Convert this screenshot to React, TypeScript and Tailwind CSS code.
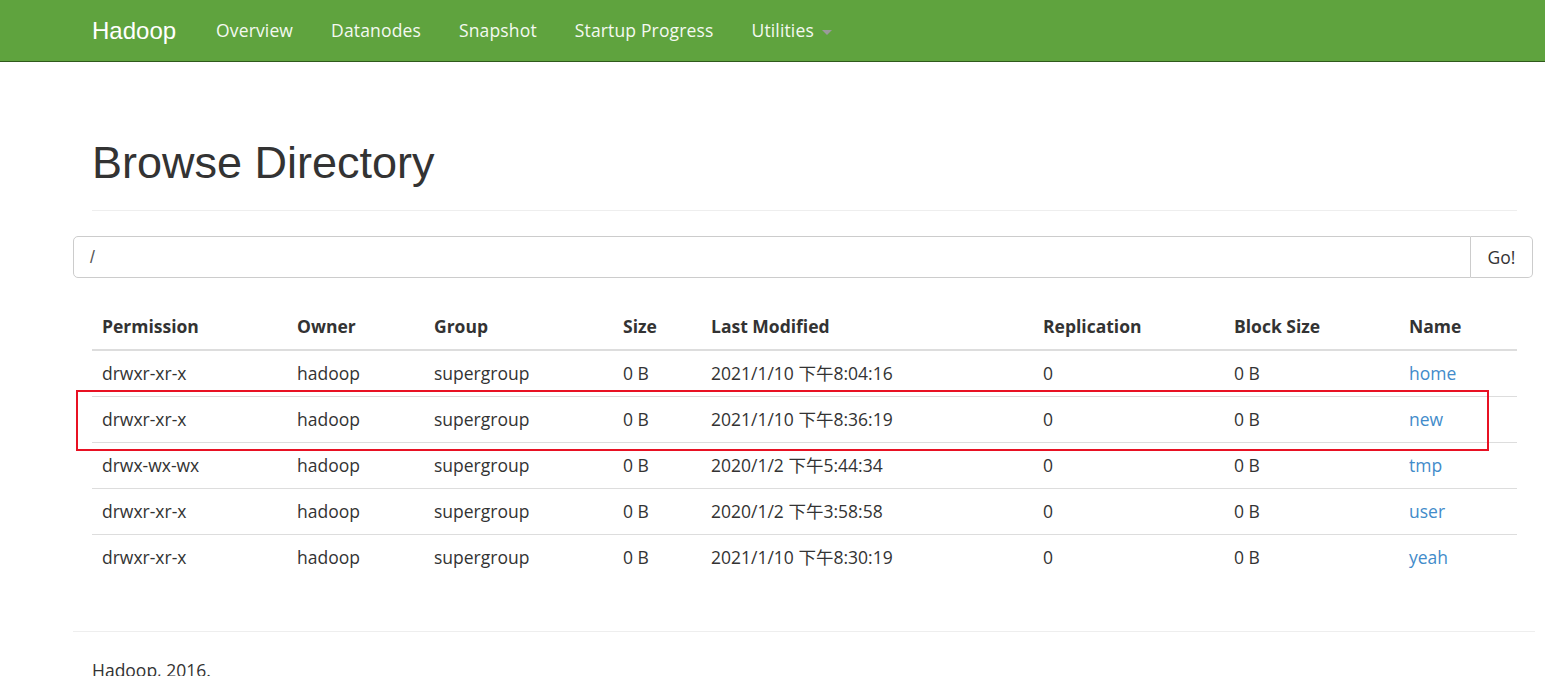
const rows = [
  { perm: 'drwxr-xr-x', owner: 'hadoop', group: 'supergroup', size: '0 B', mod: '2021/1/10 下午8:04:16', rep: '0', block: '0 B', name: 'home' },
  { perm: 'drwxr-xr-x', owner: 'hadoop', group: 'supergroup', size: '0 B', mod: '2021/1/10 下午8:36:19', rep: '0', block: '0 B', name: 'new' },
  { perm: 'drwx-wx-wx', owner: 'hadoop', group: 'supergroup', size: '0 B', mod: '2020/1/2 下午5:44:34', rep: '0', block: '0 B', name: 'tmp' },
  { perm: 'drwxr-xr-x', owner: 'hadoop', group: 'supergroup', size: '0 B', mod: '2020/1/2 下午3:58:58', rep: '0', block: '0 B', name: 'user' },
  { perm: 'drwxr-xr-x', owner: 'hadoop', group: 'supergroup', size: '0 B', mod: '2021/1/10 下午8:30:19', rep: '0', block: '0 B', name: 'yeah' },
];

const cols = ['w-[195px]', 'w-[137px]', 'w-[189px]', 'w-[88px]', 'w-[332px]', 'w-[191px]', 'w-[175px]', 'w-[118px]'];
const heads = ['Permission', 'Owner', 'Group', 'Size', 'Last Modified', 'Replication', 'Block Size', 'Name'];

const body = { fontFamily: '"Open Sans", "Noto Sans CJK SC", sans-serif' };
const arial = { fontFamily: '"Liberation Sans", Arial, sans-serif' };

export default function App() {
  return (
    <div className="relative min-h-[676px] bg-white text-[#333] text-[17.5px]" style={body}>
      {/* Navbar */}
      <nav className="h-[62px] bg-[#5fa33e] border-b border-[#2f5a1c] flex items-center">
        <a className="ml-[92px] w-[105px] text-[24px] text-white leading-none" style={arial}>Hadoop</a>
        <ul className="flex items-center text-[#f4f9f1] tracking-[0.15px]">
          <li className="px-[19px]">Overview</li>
          <li className="px-[19px]">Datanodes</li>
          <li className="px-[19px]">Snapshot</li>
          <li className="px-[19px]">Startup Progress</li>
          <li className="px-[19px] flex items-center">
            Utilities
            <span className="ml-[8px] mt-[3px] w-0 h-0 border-l-[5px] border-r-[5px] border-t-[5px] border-l-transparent border-r-transparent border-t-[#9a9a9a]" />
          </li>
        </ul>
      </nav>

      {/* Page header */}
      <div className="ml-[92px] w-[1425px] mt-[76px] pb-[22px] border-b border-[#eee]">
        <h1 className="text-[45px] leading-[50px] text-[#333]" style={arial}>Browse Directory</h1>
      </div>

      {/* Path input */}
      <div className="ml-[73px] w-[1460px] mt-[25px] flex h-[42px]">
        <div className="flex-1 border border-[#ccc] rounded-l-[5px] flex items-center pl-[16px] text-[#555]" style={arial}>/</div>
        <button className="w-[62px] border border-l-0 border-[#ccc] rounded-r-[5px] bg-white text-[#333]">Go!</button>
      </div>

      {/* Table */}
      <table className="ml-[92px] w-[1425px] mt-[25px] border-collapse table-fixed">
        <thead>
          <tr className="h-[47px] border-b-2 border-[#ddd]">
            {heads.map((h, i) => (
              <th key={h} className={`${cols[i]} text-left font-bold px-[10px] align-middle`}>{h}</th>
            ))}
          </tr>
        </thead>
        <tbody>
          {rows.map((r, idx) => (
            <tr key={r.name} className={`h-[46px] ${idx > 0 ? 'border-t border-[#ddd]' : ''}`}>
              <td className="px-[10px]">{r.perm}</td>
              <td className="px-[10px]">{r.owner}</td>
              <td className="px-[10px]">{r.group}</td>
              <td className="px-[10px]">{r.size}</td>
              <td className="px-[10px]">{r.mod}</td>
              <td className="px-[10px]">{r.rep}</td>
              <td className="px-[10px]">{r.block}</td>
              <td className="px-[10px]"><a className="text-[#428bca]">{r.name}</a></td>
            </tr>
          ))}
        </tbody>
      </table>

      {/* Footer */}
      <div className="ml-[73px] w-[1462px] mt-[51px] border-t border-[#eee]">
        <p className="ml-[19px] mt-[25px]">Hadoop, 2016.</p>
      </div>

      {/* Red annotation box */}
      <div className="absolute left-[76px] top-[390px] w-[1413px] h-[61px] border-2 border-[#e81123] pointer-events-none" />
    </div>
  );
}
